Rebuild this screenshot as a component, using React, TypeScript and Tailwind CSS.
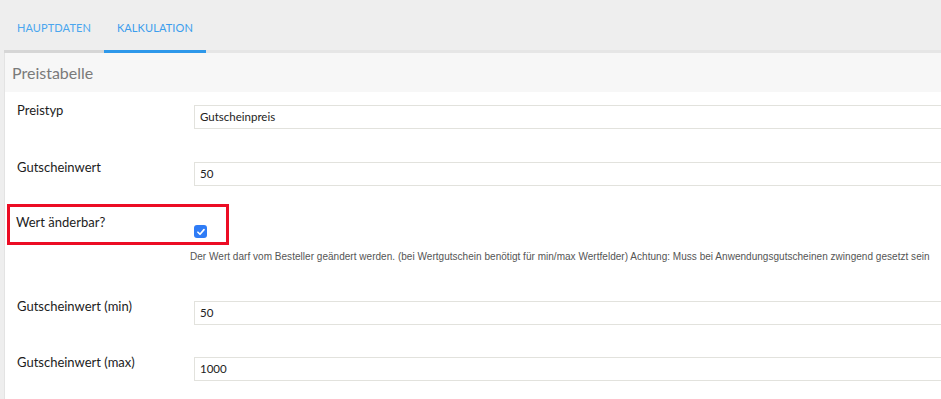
import React from 'react';

const font = { fontFamily: 'Lato, "Open Sans", sans-serif' };

function TextRow({ label, value, className }: { label: string; value: string; className: string }) {
  return (
    <div className={`flex items-start ${className}`}>
      <div className="w-[189px] shrink-0 pl-[12px] text-[13px] leading-[18px] text-[#1c1c1c]">{label}</div>
      <div className="mt-[4px] flex h-[24px] flex-1 items-center border border-r-0 border-[#e2e2dd] bg-white pl-[5px] text-[11.5px] text-[#222]">
        {value}
      </div>
    </div>
  );
}

export default function App() {
  return (
    <div className="h-[399px] w-[941px] overflow-hidden bg-[#eeeeee]" style={font}>
      {/* tabs */}
      <div className="flex h-[53px] items-stretch pl-[4px]">
        <div className="flex items-center border-b-[3px] border-[#d6d6d6] px-[13px] pt-[6px] text-[11px] tracking-[0.1px] text-[#4aa6ee]">
          HAUPTDATEN
        </div>
        <div className="flex items-center border-b-[3px] border-[#2e98ea] px-[13px] pt-[6px] text-[11px] tracking-[0.1px] text-[#3b9ded]">
          KALKULATION
        </div>
        <div className="flex-1 border-b-[3px] border-[#e6e6e6]" />
      </div>

      {/* panel */}
      <div className="ml-[4px] h-full border-l border-[#e3e3e3] bg-white">
        <div className="flex h-[39px] items-center bg-[#f7f7f7] pl-[7px] text-[16px] text-[#7a7a7a]">Preistabelle</div>

        <TextRow label="Preistyp" value="Gutscheinpreis" className="pt-[9px]" />
        <TextRow label="Gutscheinwert" value="50" className="mt-[29px]" />

        <div className="ml-[2px] mt-[18px] flex h-[41px] w-[222px] border-[3px] border-[#ec0c24] pl-[6px]">
          <div className="w-[178px] pt-[6px] text-[13px] leading-[18px] text-[#1c1c1c]">Wert änderbar?</div>
          <div className="pt-[18px]">
            <span className="flex h-[13px] w-[13px] items-center justify-center rounded-[3px] bg-[#2f7cf6]">
              <svg viewBox="0 0 12 12" className="h-[10px] w-[10px]">
                <path d="M2.3 6.3 L4.8 8.7 L9.6 3.2" fill="none" stroke="#fff" strokeWidth="2" strokeLinecap="round" strokeLinejoin="round" />
              </svg>
            </span>
          </div>
        </div>

        <div
          className="mt-[5px] pl-[185px] text-[10px] leading-[14px] tracking-[0.03px] text-[#555]"
          style={{ fontFamily: '"Liberation Sans", sans-serif' }}
        >
          Der Wert darf vom Besteller geändert werden. (bei Wertgutschein benötigt für min/max Wertfelder) Achtung: Muss bei Anwendungsgutscheinen zwingend gesetzt sein
        </div>

        <TextRow label="Gutscheinwert (min)" value="50" className="mt-[33px]" />
        <TextRow label="Gutscheinwert (max)" value="1000" className="mt-[28px]" />
      </div>
    </div>
  );
}
